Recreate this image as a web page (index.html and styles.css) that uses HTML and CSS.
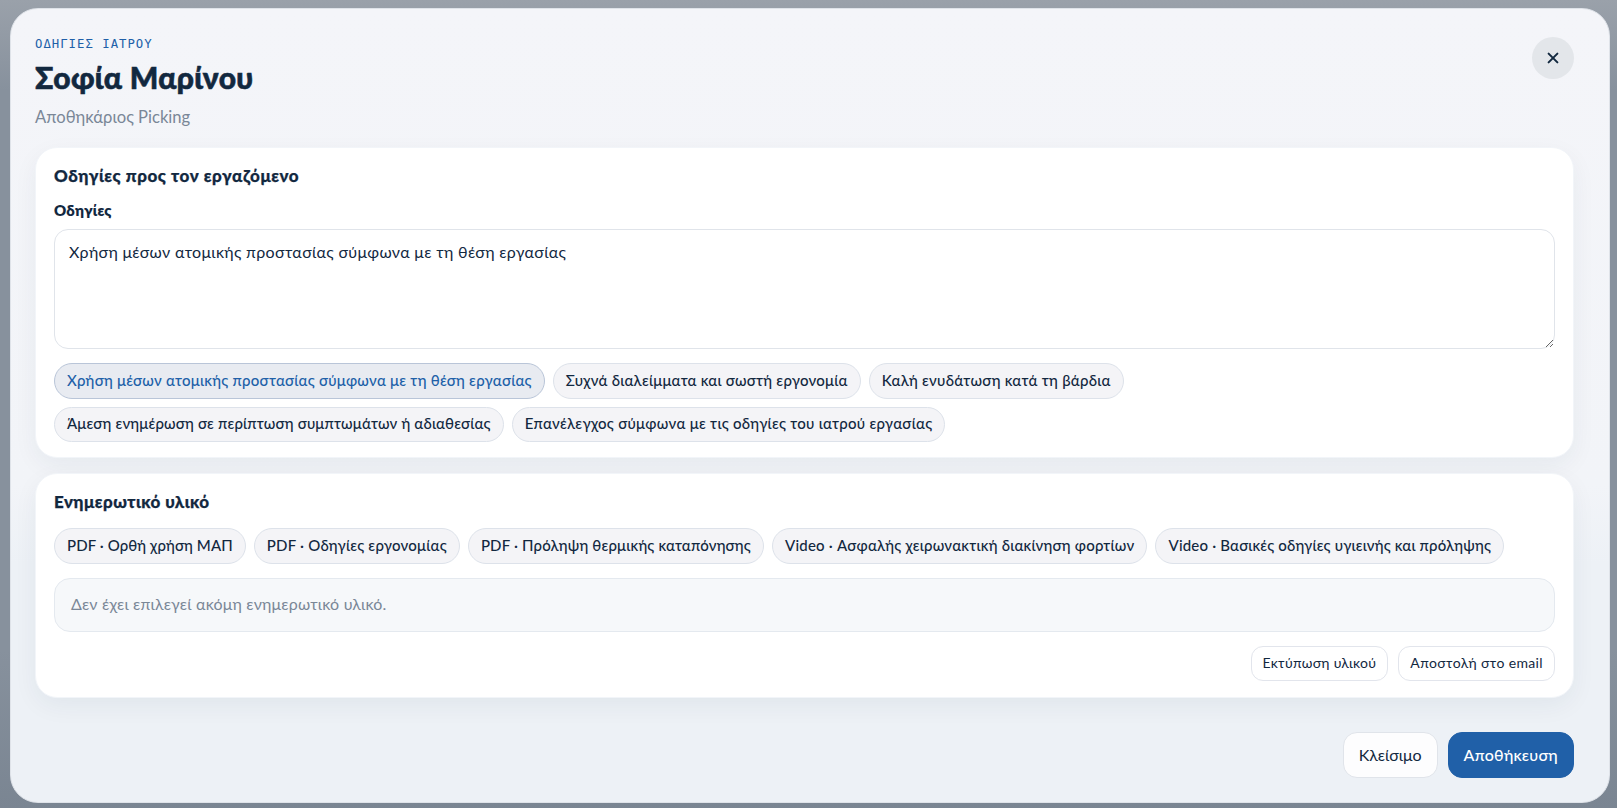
FILE: index.html
```html
<!DOCTYPE html>
<html lang="el">
  <head>
    <meta charset="UTF-8" />
    <meta name="viewport" content="width=device-width, initial-scale=1.0" />
    <title>Οδηγίες ιατρού</title>
    <link rel="stylesheet" href="styles.css" />
  </head>
  <body>
    <div class="overlay">
      <div class="modal" role="dialog" aria-modal="true">
        <header class="modal-header">
          <div>
            <p class="eyebrow">ΟΔΗΓΙΕΣ ΙΑΤΡΟΥ</p>
            <h2>Σοφία Μαρίνου</h2>
            <p class="subtitle">Αποθηκάριος Picking</p>
          </div>
          <button type="button" class="close">
            <svg width="12" height="12" viewBox="0 0 12 12">
              <path d="M1.6 1.6 10.4 10.4M10.4 1.6 1.6 10.4" />
            </svg>
          </button>
        </header>

        <section class="card">
          <h3>Οδηγίες προς τον εργαζόμενο</h3>
          <label for="instructions">Οδηγίες</label>
          <textarea id="instructions" spellcheck="false">Χρήση μέσων ατομικής προστασίας σύμφωνα με τη θέση εργασίας</textarea>
          <div class="chips presets">
            <button type="button" class="chip active">Χρήση μέσων ατομικής προστασίας σύμφωνα με τη θέση εργασίας</button>
            <button type="button" class="chip">Συχνά διαλείμματα και σωστή εργονομία</button>
            <button type="button" class="chip">Καλή ενυδάτωση κατά τη βάρδια</button>
            <button type="button" class="chip">Άμεση ενημέρωση σε περίπτωση συμπτωμάτων ή αδιαθεσίας</button>
            <button type="button" class="chip">Επανέλεγχος σύμφωνα με τις οδηγίες του ιατρού εργασίας</button>
          </div>
        </section>

        <section class="card">
          <h3 class="tight">Ενημερωτικό υλικό</h3>
          <div class="chips materials">
            <button type="button" class="chip">PDF · Ορθή χρήση ΜΑΠ</button>
            <button type="button" class="chip">PDF · Οδηγίες εργονομίας</button>
            <button type="button" class="chip">PDF · Πρόληψη θερμικής καταπόνησης</button>
            <button type="button" class="chip">Video · Ασφαλής χειρωνακτική διακίνηση φορτίων</button>
            <button type="button" class="chip">Video · Βασικές οδηγίες υγιεινής και πρόληψης</button>
          </div>
          <div class="empty">Δεν έχει επιλεγεί ακόμη ενημερωτικό υλικό.</div>
          <div class="card-actions">
            <button type="button" class="btn-small">Εκτύπωση υλικού</button>
            <button type="button" class="btn-small email">Αποστολή στο email</button>
          </div>
        </section>

        <footer class="modal-footer">
          <button type="button" class="btn">Κλείσιμο</button>
          <button type="button" class="btn primary">Αποθήκευση</button>
        </footer>
      </div>
    </div>
  </body>
</html>
```
FILE: styles.css
```css
* {
  box-sizing: border-box;
}
body {
  margin: 0;
  font-family: Lato, "Open Sans", sans-serif;
  color: #12283f;
}
h2,
h3,
p {
  margin: 0;
}
button,
textarea {
  font-family: inherit;
  color: inherit;
}
.overlay {
  height: 808px;
  padding: 8px 7px 5px 10px;
  overflow: hidden;
  background: linear-gradient(180deg, #9aa1aa 0, #87919d 90px, #87919d 650px, #7a8592 100%);
}
.modal {
  height: 795px;
  padding: 28px 35px 0 24px;
  border: 1px solid #dfe3e9;
  border-radius: 28px;
  background: linear-gradient(180deg, #f4f5f9, #f2f4f8 60%, #edf1f6 70%);
}
.modal-header {
  display: flex;
  justify-content: space-between;
  height: 110px;
}
.eyebrow {
  font: 12.3px/15px "DejaVu Sans Mono", monospace;
  letter-spacing: 1px;
  color: #2060a8;
}
h2 {
  margin-top: 6px;
  font-size: 30px;
  line-height: 38px;
  font-weight: 900;
  letter-spacing: 0.35px;
  -webkit-text-stroke: 0.6px #12283f;
}
.subtitle {
  margin-top: 9px;
  font-size: 16.6px;
  line-height: 24px;
  color: #7a8797;
}
.close {
  display: flex;
  justify-content: center;
  align-items: center;
  width: 42px;
  height: 42px;
  padding: 0;
  border: 0;
  border-radius: 50%;
  background: #e3e6ea;
}
.close svg {
  fill: none;
  stroke: #12283f;
  stroke-width: 2;
  stroke-linecap: round;
}
.card {
  height: 311px;
  padding: 17px 18px;
  border: 1px solid #f2f5f9;
  border-radius: 22px;
  background: #fff;
  box-shadow: 0 8px 24px rgba(18, 50, 70, 0.055);
}
.card + .card {
  height: 225px;
  margin-top: 15px;
}
h3 {
  font-size: 17px;
  line-height: 22px;
  font-weight: 900;
  letter-spacing: 0.56px;
  -webkit-text-stroke: 0.25px #12283f;
}
h3.tight {
  letter-spacing: 0.45px;
}
label {
  display: block;
  margin-top: 12px;
  font-size: 15px;
  line-height: 22px;
  font-weight: 800;
  letter-spacing: 0.2px;
}
textarea {
  display: block;
  width: 100%;
  height: 120px;
  margin-top: 8px;
  padding: 11px 14px;
  border: 1px solid #e0e4ea;
  border-radius: 14px;
  outline: 0;
  background: #fff;
  font-size: 16px;
  line-height: 22px;
  letter-spacing: 0.31px;
  resize: vertical;
}
.chips {
  display: flex;
  flex-wrap: wrap;
  gap: 8px;
  margin-top: 14px;
}
.chip {
  height: 35.5px;
  padding: 0 12px 2px;
  border: 1px solid #dde2ea;
  border-radius: 18px;
  background: #f4f4f7;
  font-size: 15px;
  font-weight: 500;
  letter-spacing: 0.22px;
  white-space: nowrap;
}
.chip.active {
  border-color: #b9c5d8;
  background: #e8ebf1;
  color: #2060a8;
  letter-spacing: 0.235px;
}
.presets .chip:nth-child(3) {
  letter-spacing: 0.27px;
}
.presets .chip:nth-child(4) {
  letter-spacing: 0.17px;
}
.presets .chip:nth-child(5) {
  letter-spacing: 0.28px;
}
.materials {
  margin-top: 15px;
}
.materials .chip:nth-child(1) {
  letter-spacing: 0.1px;
}
.materials .chip:nth-child(3) {
  letter-spacing: 0.17px;
}
.materials .chip:nth-child(5) {
  letter-spacing: 0.18px;
}
.empty {
  height: 54px;
  margin-top: 14px;
  padding: 0 16px;
  border: 1px solid #e4e9ef;
  border-radius: 16px;
  background: #f6f8fa;
  color: #7a8797;
  font-size: 16px;
  line-height: 50px;
  letter-spacing: 0.18px;
}
.card-actions {
  display: flex;
  justify-content: flex-end;
  gap: 10px;
  margin-top: 14px;
}
.btn-small {
  height: 35px;
  padding: 0 11px 2px;
  border: 1px solid #e2e5ec;
  border-radius: 12px;
  background: #fff;
  font-size: 14px;
  letter-spacing: 0.28px;
}
.btn-small.email {
  letter-spacing: 0.36px;
}
.modal-footer {
  display: flex;
  justify-content: flex-end;
  gap: 10px;
  margin-top: 34px;
}
.btn {
  height: 46px;
  padding: 0 15px 2px;
  border: 1px solid #e0e4ea;
  border-radius: 14px;
  background: #fdfdfe;
  font-size: 16px;
}
.btn.primary {
  border-color: #2060a8;
  background: #2060a8;
  color: #fff;
  font-weight: 500;
  letter-spacing: 0.25px;
}
```
